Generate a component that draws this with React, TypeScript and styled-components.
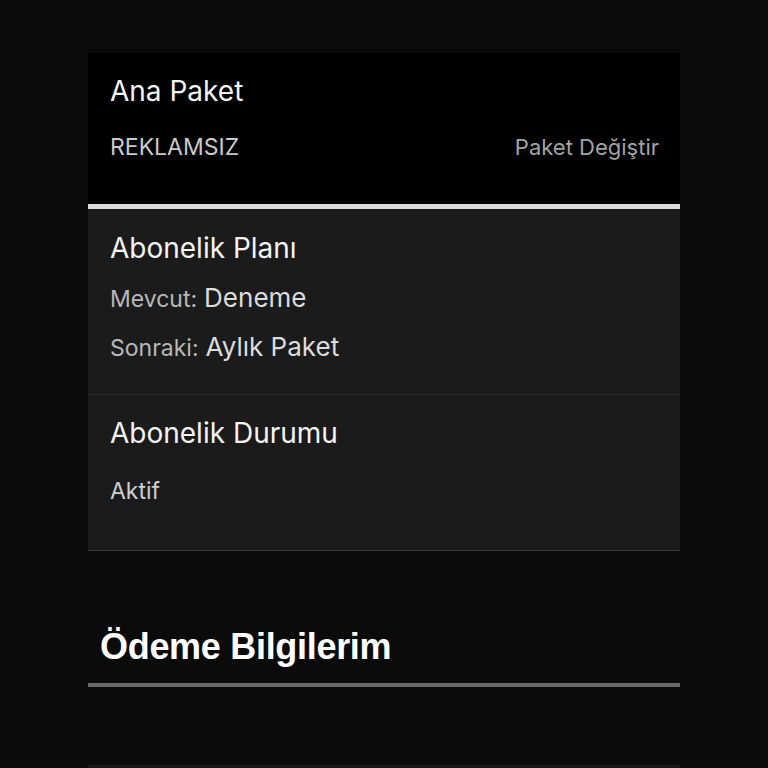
import React from "react";
import styled, { createGlobalStyle } from "styled-components";

const GlobalStyle = createGlobalStyle`
  html, body {
    margin: 0;
    padding: 0;
    background: #0b0b0b;
    font-family: Inter, "Noto Sans", sans-serif;
  }
  * { box-sizing: border-box; }
`;

const Page = styled.div`
  width: 768px;
  height: 768px;
  overflow: hidden;
  background: #0b0b0b;
  padding: 53px 88px 0 88px;
`;

const Card = styled.div`
  width: 592px;
  display: flex;
  flex-direction: column;
`;

const PackageSection = styled.section`
  background: #000;
  padding: 22px 21px 42px 22px;
  border-bottom: 5px solid #dcdcdc;
`;

const InfoSection = styled.section<{ $pt: number; $pb: number; $border: string }>`
  background: #1b1b1b;
  padding: ${(p) => p.$pt}px 21px ${(p) => p.$pb}px 22px;
  border-bottom: 1px solid ${(p) => p.$border};
  display: flex;
  flex-direction: column;
`;

const Title = styled.h2`
  margin: 0;
  font-size: 28px;
  line-height: 32px;
  font-weight: 400;
  color: #f4f4f4;
`;

const Row = styled.div<{ $mt: number }>`
  margin-top: ${(p) => p.$mt}px;
  display: flex;
  align-items: baseline;
  justify-content: space-between;
  height: 30px;
  line-height: 30px;
`;

const Tag = styled.span`
  font-size: 23px;
  color: #cacaca;
`;

const ChangeLink = styled.a`
  font-size: 22px;
  color: #a3a3a3;
  cursor: pointer;
`;

const Label = styled.span`
  font-size: 23px;
  color: #b8b8b8;
`;

const Value = styled.span`
  font-size: 26px;
  color: #dcdcdc;
  margin-left: 7px;
`;

const Pair = styled.div`
  display: flex;
  align-items: baseline;
`;

const StatusText = styled.span`
  font-size: 23px;
  color: #cfcfcf;
`;

const SectionHeading = styled.h1`
  margin: 76px 0 16px 0;
  padding-left: 12px;
  font-family: "Liberation Sans", Arial, sans-serif;
  font-weight: 700;
  font-size: 36px;
  line-height: 40px;
  color: #ffffff;
  letter-spacing: -0.3px;
`;

const Divider = styled.div`
  width: 592px;
  height: 4px;
  background: #6a6a6a;
`;

const NextCard = styled.div`
  margin-top: 78px;
  width: 592px;
  height: 60px;
  background: #141414;
  border-top: 1px solid #1f1f1f;
`;

export default function App() {
  return (
    <>
      <GlobalStyle />
      <Page>
        <Card>
          <PackageSection>
            <Title>Ana Paket</Title>
            <Row $mt={25}>
              <Tag>REKLAMSIZ</Tag>
              <ChangeLink>Paket Değiştir</ChangeLink>
            </Row>
          </PackageSection>
          <InfoSection $pt={23} $pb={32} $border="#2e2e2e">
            <Title>Abonelik Planı</Title>
            <Row $mt={19}>
              <Pair>
                <Label>Mevcut:</Label>
                <Value>Deneme</Value>
              </Pair>
            </Row>
            <Row $mt={19}>
              <Pair>
                <Label>Sonraki:</Label>
                <Value>Aylık Paket</Value>
              </Pair>
            </Row>
          </InfoSection>
          <InfoSection $pt={22} $pb={44} $border="#3a3a3a">
            <Title>Abonelik Durumu</Title>
            <Row $mt={27}>
              <StatusText>Aktif</StatusText>
            </Row>
          </InfoSection>
        </Card>
        <SectionHeading>Ödeme Bilgilerim</SectionHeading>
        <Divider />
        <NextCard />
      </Page>
    </>
  );
}
